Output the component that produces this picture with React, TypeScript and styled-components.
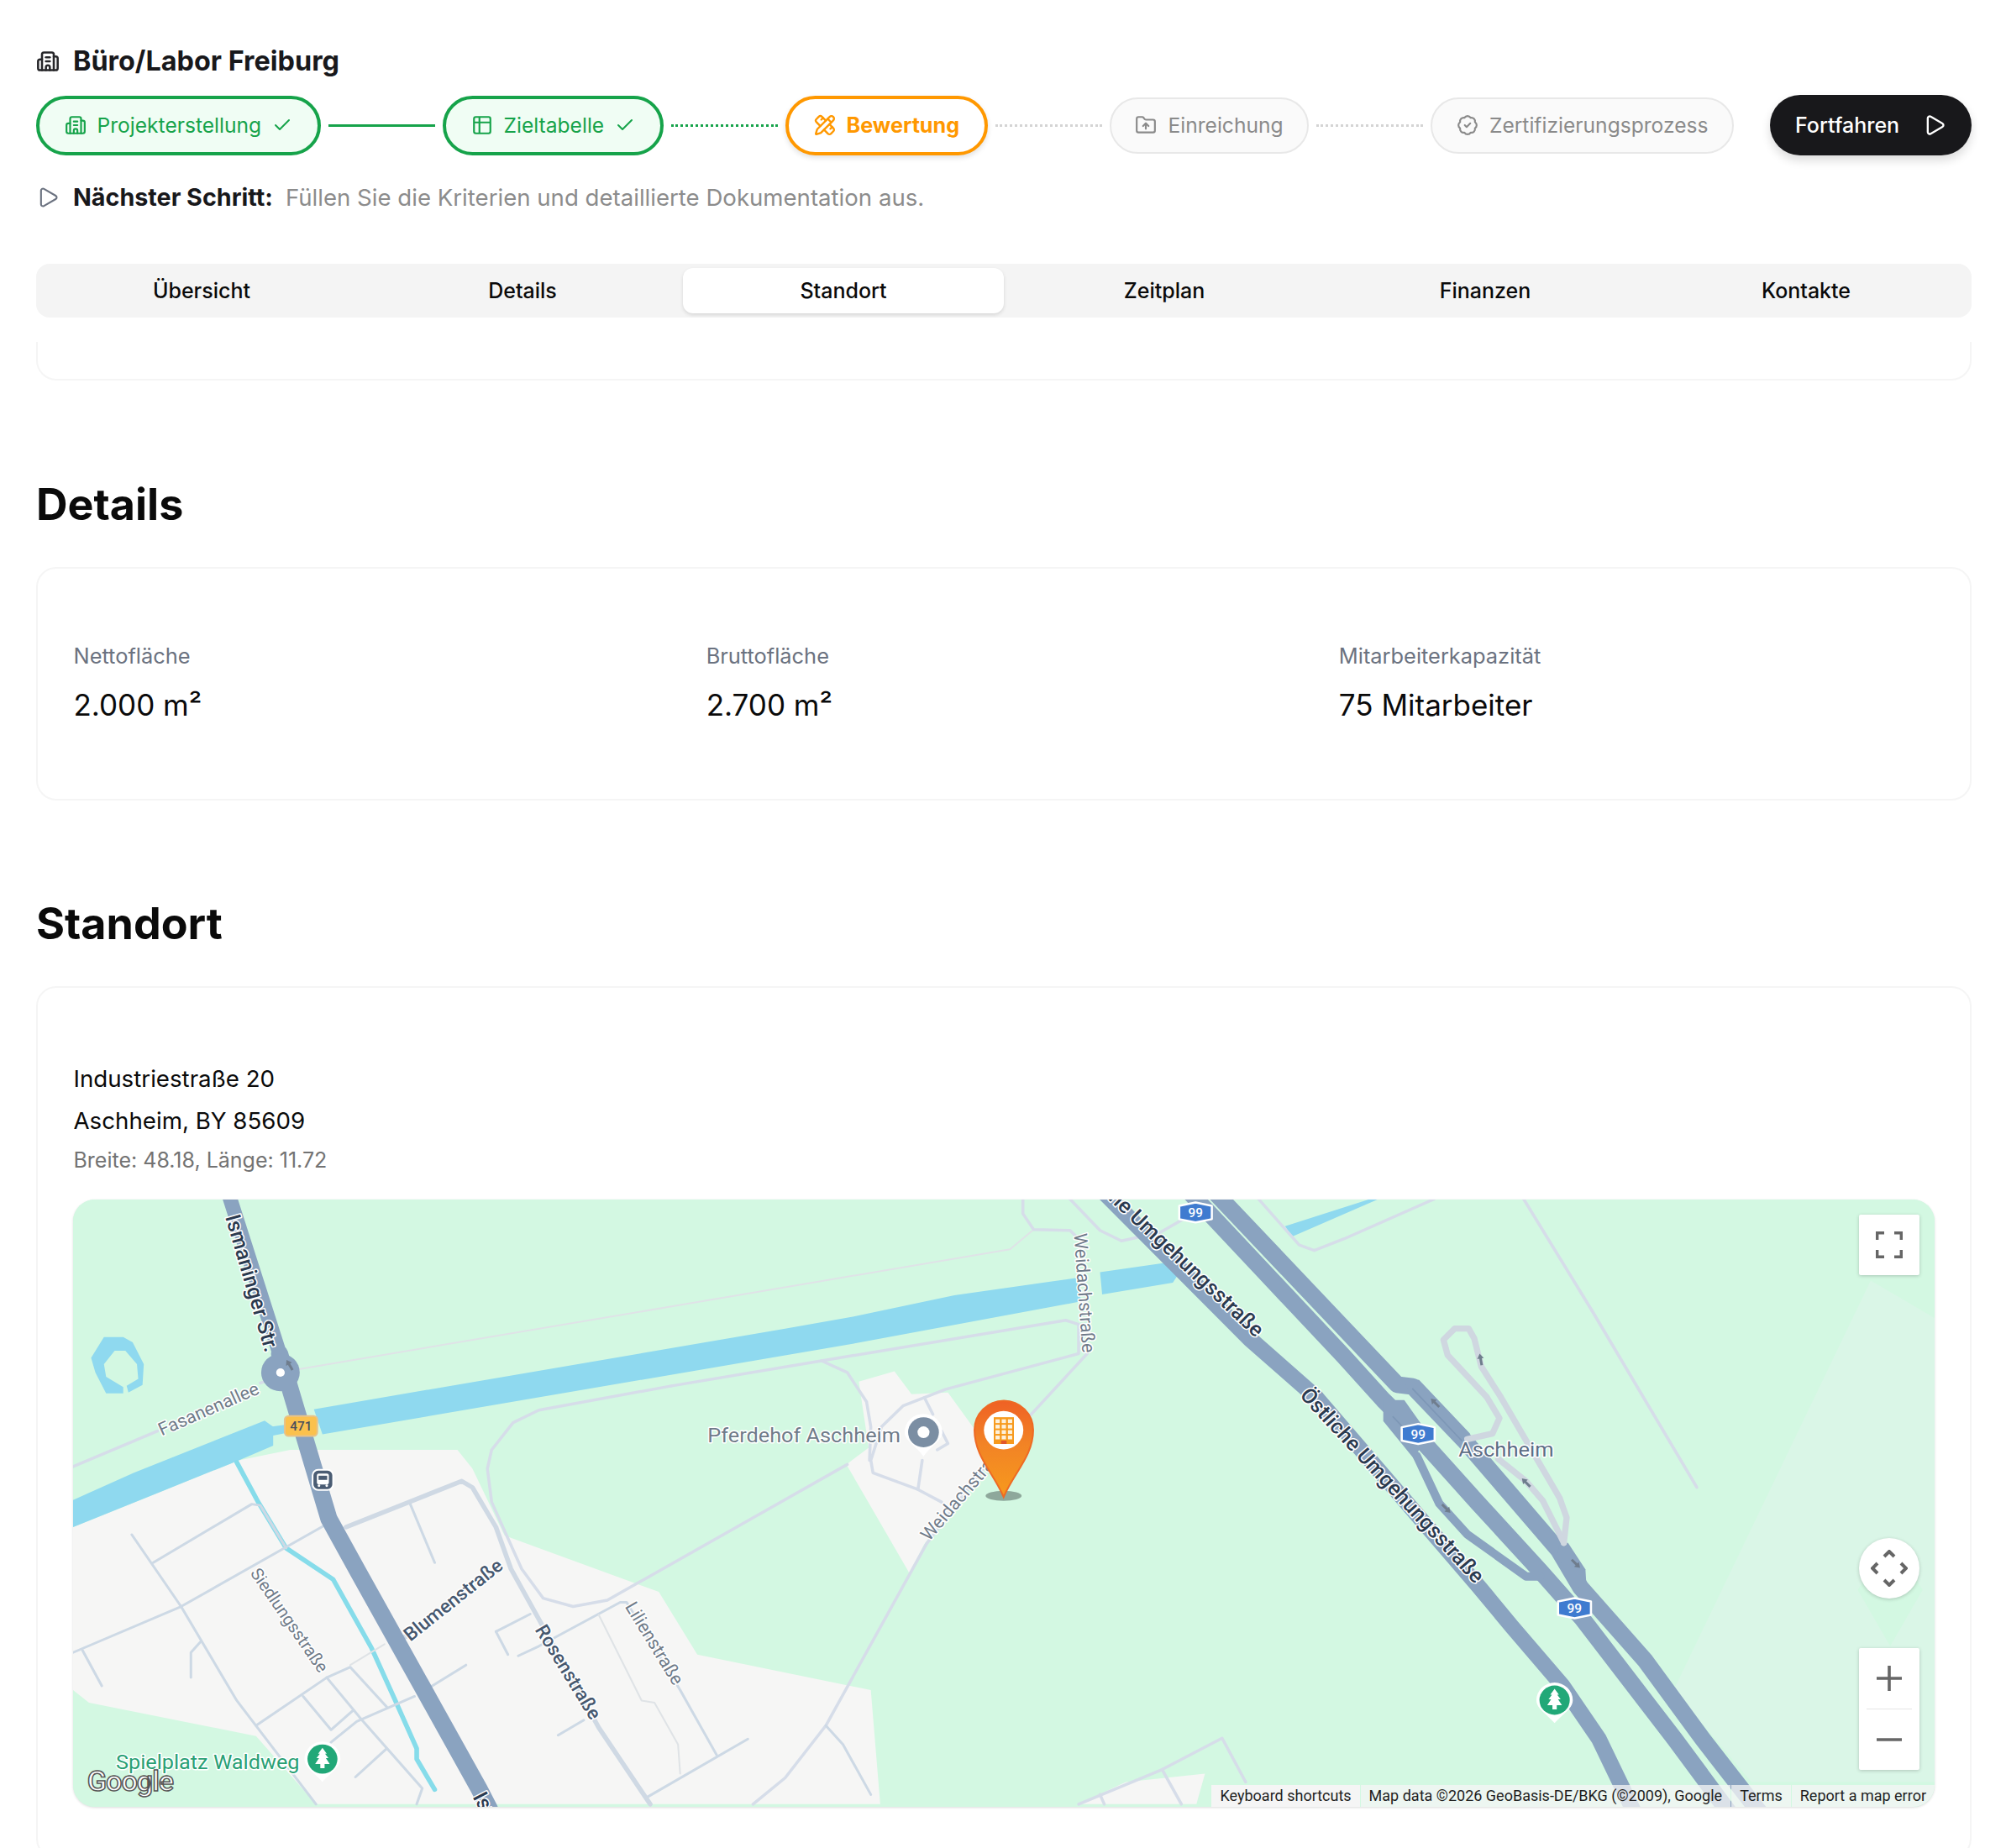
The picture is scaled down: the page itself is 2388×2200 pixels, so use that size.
import React from 'react';
import styled, { createGlobalStyle } from 'styled-components';
import { Building2, Table2, PencilRuler, FolderUp, BadgeCheck, Check, Play } from 'lucide-react';

const GlobalStyle = createGlobalStyle`
  html, body {
    margin: 0;
    padding: 0;
    background: #fff;
    font-family: Inter, "Liberation Sans", sans-serif;
    color: #0a0a0a;
  }
`;

const Page = styled.div`
  box-sizing: border-box;
  width: 2388px;
  height: 2200px;
  overflow: hidden;
  padding: 53px 41px 0 43px;
`;

const TitleRow = styled.div`
  display: flex;
  align-items: center;
  gap: 16px;
  height: 40px;
`;

const Title = styled.h1`
  margin: 0;
  font-size: 32.4px;
  line-height: 40px;
  font-weight: 700;
  color: #18181b;
`;

const StepRow = styled.div`
  display: flex;
  align-items: center;
  height: 72px;
  margin-top: 20px;
`;

type StepState = 'done' | 'active' | 'todo';

const stepColor = { done: '#16a34a', active: '#ff9800', todo: '#8a8a8a' };

const Step = styled.div<{ $state: StepState }>`
  box-sizing: border-box;
  display: flex;
  align-items: center;
  gap: 13px;
  border-radius: 999px;
  white-space: nowrap;
  height: ${p => (p.$state === 'todo' ? '67px' : '71px')};
  padding: 0 ${p => (p.$state === 'todo' ? '28.5px' : '29.5px')};
  font-size: ${p => (p.$state === 'active' ? '25.2px' : '24.6px')};
  font-weight: ${p => (p.$state === 'active' ? 700 : 400)};
  color: ${p => stepColor[p.$state]};
  border: ${p => (p.$state === 'todo' ? '2px solid #e8e8e8' : `4px solid ${stepColor[p.$state]}`)};
  background: ${p => (p.$state === 'done' ? '#f0fdf4' : p.$state === 'active' ? '#fff' : '#fafafa')};
  box-shadow: ${p => (p.$state === 'active' ? '0 3px 6px rgba(0,0,0,.12)' : 'none')};
`;

const Connector = styled.div<{ $kind: 'solid' | 'dotted' | 'muted' }>`
  flex: 1;
  margin: 0 9px;
  height: 0;
  border-top: ${p =>
    p.$kind === 'solid'
      ? '3px solid #16a34a'
      : p.$kind === 'dotted'
        ? '3px dotted #16a34a'
        : '3px dotted #d4d4d4'};
`;

const ContinueButton = styled.button`
  display: flex;
  align-items: center;
  justify-content: space-between;
  box-sizing: border-box;
  flex: none;
  width: 240px;
  height: 72px;
  margin-left: 43px;
  padding: 0 30px;
  border: none;
  border-radius: 999px;
  background: #18181b;
  color: #fff;
  font-family: inherit;
  font-size: 25px;
  font-weight: 500;
  box-shadow: 0 6px 12px rgba(0, 0, 0, 0.14);
`;

const NextRow = styled.div`
  display: flex;
  align-items: center;
  height: 40px;
  margin-top: 30px;
  line-height: 40px;
`;

const NextIcon = styled.span`
  display: flex;
  width: 44px;
  color: #6b7280;
`;

const NextLabel = styled.span`
  font-size: 28.7px;
  font-weight: 700;
  color: #18181b;
  margin-right: 15px;
`;

const NextText = styled.span`
  font-size: 27.6px;
  color: #8c8c8c;
`;

const Tabs = styled.div`
  box-sizing: border-box;
  display: grid;
  grid-template-columns: repeat(6, 1fr);
  height: 64px;
  margin-top: 59px;
  padding: 5px 6px;
  border-radius: 16px;
  background: #f4f4f4;
`;

const Tab = styled.div<{ $active?: boolean }>`
  display: flex;
  align-items: center;
  justify-content: center;
  border-radius: 12px;
  font-size: 25px;
  font-weight: 500;
  color: #0a0a0a;
  background: ${p => (p.$active ? '#fff' : 'transparent')};
  box-shadow: ${p => (p.$active ? '0 2px 4px rgba(0,0,0,.12)' : 'none')};
`;

const ClippedCard = styled.div`
  box-sizing: border-box;
  height: 46px;
  margin-top: 29px;
  border: 2px solid #f5f5f5;
  border-top: none;
  border-radius: 0 0 24px 24px;
`;

const SectionTitle = styled.h2<{ $top: number }>`
  margin: ${p => p.$top}px 0 0;
  font-size: 52px;
  line-height: 60px;
  font-weight: 700;
  color: #0a0a0a;
`;

const Card = styled.div`
  box-sizing: border-box;
  margin-top: 44px;
  border: 2px solid #f5f5f5;
  border-radius: 24px;
`;

const DetailGrid = styled.div`
  display: grid;
  grid-template-columns: repeat(3, 1fr);
  gap: 45px;
  padding: 86px 43px 88px 42.5px;
`;

const Label = styled.div`
  font-size: 25.4px;
  line-height: 36px;
  color: #6b7280;
`;

const Value = styled.div`
  margin-top: 16px;
  font-size: 35px;
  line-height: 48px;
  font-weight: 400;
  color: #0a0a0a;
`;

const LocationBody = styled.div`
  padding: 83px 43px 60px 42.5px;
`;

const AddressLine = styled.div`
  font-size: 27.7px;
  line-height: 50px;
  color: #0a0a0a;
`;

const Coords = styled.div`
  margin-top: 4px;
  font-size: 25px;
  line-height: 36px;
  color: #737373;
`;

const MapFrame = styled.div`
  position: relative;
  height: 723px;
  margin: 29px -1px 0 -0.5px;
  overflow: hidden;
  border-radius: 26px;
  background: #d3f8e2;
  box-shadow: 0 1px 3px rgba(0, 0, 0, 0.14);
`;

const MapCanvas = styled.svg`
  display: block;
  width: 100%;
  height: 100%;
  font-family: Roboto, "Liberation Sans", sans-serif;
`;

const labelColor = { dark: '#2b3a4f', mid: '#46586f', soft: '#6f7b89', green: '#28a074', city: '#5b6d84' };

const MapLabel = styled.text<{ $tone: keyof typeof labelColor; $size: number; $bold?: boolean }>`
  fill: ${p => labelColor[p.$tone]};
  font-size: ${p => p.$size}px;
  font-weight: ${p => (p.$bold ? 500 : 400)};
  paint-order: stroke;
  stroke: #fff;
  stroke-width: 6px;
  stroke-linejoin: round;
`;

const GoogleMark = styled.text`
  fill: #fff;
  stroke: #555;
  stroke-width: 3px;
  font-size: 67px;
  font-weight: 500;
  letter-spacing: -2px;
`;

const ShieldText = styled.text<{ $fill: string }>`
  fill: ${p => p.$fill};
  font-size: 30px;
  font-weight: 500;
  text-anchor: middle;
`;

const ControlBox = styled.div<{ $round?: boolean; $top?: number; $bottom?: number }>`
  position: absolute;
  right: 18px;
  top: ${p => (p.$top !== undefined ? `${p.$top}px` : 'auto')};
  bottom: ${p => (p.$bottom !== undefined ? `${p.$bottom}px` : 'auto')};
  width: 72px;
  background: #fff;
  border-radius: ${p => (p.$round ? '50%' : '2px')};
  box-shadow: 0 1px 4px rgba(0, 0, 0, 0.2);
`;

const ControlCell = styled.div`
  display: flex;
  align-items: center;
  justify-content: center;
  height: 72px;
`;

const ControlDivider = styled.div`
  height: 1px;
  margin: 0 9px;
  background: #e6e6e6;
`;

const Attribution = styled.div`
  position: absolute;
  right: 0;
  bottom: 0;
  display: flex;
  height: 26px;
  font-family: Roboto, "Liberation Sans", sans-serif;
  font-size: 18px;
  line-height: 26px;
  color: #1f1f1f;
`;

const AttributionItem = styled.span<{ $solid?: boolean }>`
  padding: 0 10px;
  margin-left: 1px;
  white-space: nowrap;
  background: ${p => (p.$solid ? '#f5f5f5' : 'rgba(245,245,245,.75)')};
`;

const GREEN_ROAD = '#d6dde9';
const CITY_ROAD = '#cdd9e5';
const HIGHWAY = '#8aa3c0';

// all map geometry below is traced in crop coordinates, the groups scale it back to page px
const cityRoads = [
  '53,1100 305,990 650,790',
  '190,818 305,990 435,1215 620,1463',
  '240,885 470,745 490,748 550,850',
  '840,745 897,885',
  '75,1095 120,1180',
  '350,1075 328,1100 328,1160',
  '480,1275 645,1160 700,1135 785,1230',
  '590,1205 655,1285 705,1240',
  '645,1160 730,1265 868,1425 855,1463',
  '655,1315 715,1265 850,1205',
  '875,1190 970,1130',
  '785,1330 712,1398',
  '1040,1050 1120,1008',
  '1040,1050 1068,1105',
  '1092,1108 1140,1085 1330,980 1345,980 1470,1190 1555,1345',
  '1185,1298 1245,1262',
  '1395,1445 1628,1307',
  '1810,1275 1850,1320 1915,1440',
];

const thickCityRoads = [
  '690,800 960,690 985,705 1040,800 1075,900 1140,1020 1280,1280 1400,1463',
];

const parkRoads = [
  '1450,462 1140,520 1080,550 1030,615 1020,660 1030,740 1100,900 1150,970 1220,990 1300,975 1860,650',
  '53,655 250,570',
  '490,455 505,450',
  '1450,462 1800,402 2370,305 2400,315 2400,385 2090,470 1990,510 1940,560 1915,640 1920,670 2025,710 2080,740',
  '1800,402 1860,430 1905,500 1915,560 1912,640',
  '2040,490 2060,530',
  '2035,640 2025,710',
  '2080,570 2095,600 2070,615',
  '2420,385 2285,535',
  '2185,650 2045,840 1810,1275 1715,1400 1640,1463',
  '2270,15 2270,50 2295,88 2380,90 2400,110',
  '2380,15 2450,90 2500,115 2590,95 2650,60',
  '2400,1463 2595,1380 2735,1305 2790,1410',
  '2595,1380 2640,1463',
  '2450,1440 2460,1463',
  '2820,15 2915,125 2950,138 3020,110 3230,15',
];

const faintRoads = [
  '580,422 1450,272 2240,135 2295,88',
];

const lightAlleys = [
  '700,1130 780,1080',
  '1280,1010 1380,1215 1410,1220 1465,1320 1470,1390',
];

const water = [
  '53,735 195,670 500,545 520,560 520,605 440,640 53,800',
  '500,562 550,555 550,575 500,585',
  '615,518 1715,325 1880,295 2110,245 2400,203 2405,260 1880,360 635,578',
  '2450,190 2655,160 2620,215 2455,243',
  '2882,80 3080,15 3100,15 2898,105',
  '95,395 125,345 170,345 192,358 218,410 215,460 182,478 178,462 205,445 202,410 175,378 150,378 125,410 130,440 170,465 170,480 130,480 105,430',
];

const greyLand = [
  '53,800 440,640 560,615 950,615 985,660 1060,820 1420,955 1510,1105 1915,1190 1937,1463 620,1463 480,1300 90,1220 53,1190',
  '1887,452 1970,427 2010,482 2095,478 2160,570 2185,650 2040,840 2005,910 1858,650 1910,610',
  '2400,1463 2510,1410 2695,1390 2675,1463',
];

const Road: React.FC<{ points: string; color: string; width: number }> = ({ points, color, width }) => (
  <polyline
    points={points}
    fill="none"
    stroke={color}
    strokeWidth={width}
    strokeLinecap="round"
    strokeLinejoin="round"
  />
);

const TreePin: React.FC<{ x: number; y: number }> = ({ x, y }) => (
  <g transform={`translate(${x},${y})`}>
    <path d="M-42 0a42 42 0 0 1 84 0c0 20-22 32-42 55c-20-23-42-35-42-55z" fill="#fff" />
    <circle r="35" fill="#22a878" />
    <path d="M0-27 10-13H6L14-2H8L17 12H5V22H-5V12H-17L-8-2H-14L-6-13H-10z" fill="#fff" />
  </g>
);

const Shield: React.FC<{ x: number; y: number }> = ({ x, y }) => (
  <g transform={`translate(${x},${y})`}>
    <path d="M-38-16 0-24 38-16V16L0 24-38 16z" fill="#3f7bd0" stroke="#fff" strokeWidth="5" strokeLinejoin="round" />
    <ShieldText y="11" $fill="#fff">99</ShieldText>
  </g>
);

const Arrow: React.FC<{ x: number; y: number; r: number }> = ({ x, y, r }) => (
  <path transform={`translate(${x},${y}) rotate(${r}) scale(1.5)`} d="M0-14 8-2H3V14H-3V-2H-8z" fill="#6f7d8d" />
);

const MapDrawing: React.FC = () => (
  <MapCanvas viewBox="0 0 2216 723">
    <defs>
      <linearGradient id="markerFill" x1="0" y1="0" x2="0" y2="1">
        <stop offset="0" stopColor="#ef6125" />
        <stop offset="0.45" stopColor="#f28325" />
        <stop offset="1" stopColor="#f79a1d" />
      </linearGradient>
    </defs>
    <rect width="2216" height="723" fill="#d3f8e2" />

    <g transform="translate(-27,-8) scale(0.51,0.4975)">
      {greyLand.map(p => <polygon key={p} points={p} fill="#f6f6f5" />)}
      {water.map(p => <polygon key={p} points={p} fill="#8fd9ef" />)}
      <Road points="435,645 485,740 550,850 660,925 750,1090 805,1215 855,1330 855,1355 897,1428" color="#86dcea" width={11} />
      {faintRoads.map(p => <Road key={p} points={p} color="#dfe3e7" width={4} />)}
      {parkRoads.map(p => <Road key={p} points={p} color={GREEN_ROAD} width={7} />)}
      {cityRoads.map(p => <Road key={p} points={p} color={CITY_ROAD} width={6} />)}
      {lightAlleys.map(p => <Road key={p} points={p} color="#dfe3e6" width={4} />)}
      {thickCityRoads.map(p => <Road key={p} points={p} color="#cfd9e4" width={11} />)}
      <Road points="810,1072 832,1060" color="#cfd9e4" width={12} />

      <Road points="415,0 535,385" color={HIGHWAY} width={34} />
      <Road points="535,385 650,780 720,910 1000,1425 1025,1475" color={HIGHWAY} width={40} />
      <circle cx="537" cy="430" r="45" fill={HIGHWAY} />
      <circle cx="537" cy="430" r="10" fill="#fff" />
      <path transform="translate(558,412) rotate(-30)" d="M0-14 8-2H3V14H-3V-2H-8z" fill="#6f7d8d" />

      <Road points="2460,0 2800,350 2953,488" color={HIGHWAY} width={38} />

      <g transform="translate(585,558)">
        <rect x="-38" y="-24" width="76" height="48" rx="9" fill="#fbc14d" stroke="#e7c38a" strokeWidth="4" />
        <ShieldText y="11" $fill="#4a4f5c">471</ShieldText>
      </g>
      <g transform="translate(636,687)">
        <rect x="-24" y="-24" width="48" height="48" rx="13" fill="#4a5c73" stroke="#fff" strokeWidth="4" />
        <rect x="-14" y="-15" width="28" height="26" rx="5" fill="#fff" />
        <rect x="-10" y="-10" width="20" height="10" fill="#4a5c73" />
        <circle cx="-9" cy="14" r="3" fill="#fff" />
        <circle cx="9" cy="14" r="3" fill="#fff" />
      </g>

      <MapLabel transform="translate(408,58) rotate(74)" $tone="dark" $size={50} $bold>Ismaninger Str.</MapLabel>
      <MapLabel transform="translate(260,582) rotate(-24)" $tone="soft" $size={43}>Fasanenallee</MapLabel>
      <MapLabel transform="translate(465,910) rotate(56)" $tone="soft" $size={40.5}>Siedlungsstraße</MapLabel>
      <MapLabel transform="translate(840,1075) rotate(-39)" $tone="mid" $size={45} $bold>Blumenstraße</MapLabel>
      <MapLabel transform="translate(1130,1045) rotate(59)" $tone="mid" $size={45} $bold>Rosenstraße</MapLabel>
      <MapLabel transform="translate(1340,990) rotate(59)" $tone="soft" $size={43}>Lilienstraße</MapLabel>
      <MapLabel transform="translate(985,1445) rotate(62)" $tone="dark" $size={50} $bold>Ismaninger Str.</MapLabel>
      <MapLabel x="153" y="1378" $tone="green" $size={49.5}>Spielplatz Waldweg</MapLabel>
      <TreePin x={635} y={1355} />
      <GoogleMark x="86" y="1432">Google</GoogleMark>
    </g>

    <g transform="translate(1493,-8) scale(0.5155,0.4975)">
      <polygon points="800,1190 1255,210 1403,300 1403,1410 980,1410" fill="#daf6e7" />
      <polygon points="1225,950 1300,1085 1375,950 1300,830" fill="#d3f8e2" />
    </g>

    <g transform="translate(1513,132) scale(0.3333)">
      <Road points="885,0 1260,632" color={GREEN_ROAD} width={11} />
      <Road points="640,-400 885,0" color={GREEN_ROAD} width={11} />

      <Road points="-460,-420 0,65 190,265 245,272 430,465 765,855 845,990 1075,1250 1280,1530 1490,1800" color={HIGHWAY} width={60} />
      <Road points="-550,-420 0,165 140,320 170,350 300,490 480,690 700,930 850,1100 1180,1530 1380,1800" color={HIGHWAY} width={60} />
      <Road points="-100,310 480,985 600,1130 780,1340 910,1530 1040,1800" color={HIGHWAY} width={56} />
      <Road points="260,520 340,690 440,800 650,950 700,950" color={HIGHWAY} width={30} />
      <polygon points="205,240 268,248 450,440 400,470 240,300" fill={HIGHWAY} />
      <polygon points="140,320 215,320 300,440 250,530 140,395" fill={HIGHWAY} />
      <polygon points="770,830 800,830 862,925 865,970 840,990 760,880" fill={HIGHWAY} />
      <Road points="245,280 420,465" color="#7d97b6" width={5} />
      <Road points="175,380 260,470" color="#7d97b6" width={5} />

      <Road points="785,830 795,740 770,670 560,310 490,200 465,100 445,65 395,65 355,105 370,160 510,310 555,385 530,440 440,460" color="#cfd7e0" width={22} />
      <Road points="550,530 650,610 710,680 785,830" color="#cfd7e0" width={22} />
      <Arrow x={488} y={175} r={-10} />
      <Arrow x={325} y={330} r={-45} />
      <Arrow x={650} y={615} r={-45} />
      <Arrow x={365} y={708} r={135} />
      <Arrow x={828} y={905} r={135} />
    </g>

    <g transform="translate(713,-8) scale(0.51,0.4975)">
      <MapLabel x="83" y="597" $tone="soft" $size={49.6}>Pferdehof Aschheim</MapLabel>
      <g transform="translate(587,573)">
        <path d="M-44 0a44 44 0 0 1 88 0c0 20-24 30-44 58c-20-28-44-38-44-58z" fill="#fff" />
        <circle r="36" fill="#7b8ea3" />
        <circle r="14" fill="#fff" />
      </g>
      <MapLabel transform="translate(938,98) rotate(86)" $tone="soft" $size={43}>Weidachstraße</MapLabel>
      <MapLabel transform="translate(600,835) rotate(-50)" $tone="soft" $size={43}>Weidachstraße</MapLabel>
      <MapLabel transform="translate(1362,348) rotate(44)" textAnchor="end" $tone="dark" $size={50} $bold>Östliche Umgehungsstraße</MapLabel>
      <Shield x={1222} y={47} />

      <ellipse cx="774" cy="725" rx="42" ry="12" fill="#8ea89b" />
      <path
        d="M774 728C750 670 706 630 706 568a68 70 0 0 1 137 0C843 630 798 670 774 728z"
        fill="url(#markerFill)"
        stroke="#ee6a24"
        strokeWidth="4"
      />
      <circle cx="774" cy="568" r="46" fill="#fff" />
      <rect x="751" y="537" width="47" height="64" fill="#f79a1d" />
      {[0, 1, 2, 3].map(r =>
        [0, 1, 2].map(c => (
          <rect key={`${r}-${c}`} x={755 + c * 14.5} y={542 + r * 13} width="10" height="9" fill="#fdf1dc" />
        ))
      )}
      <rect x="768" y="593" width="13" height="8" fill="#e2572b" />
    </g>

    <g transform="translate(1493,-8) scale(0.5155,0.4975)">
      <MapLabel transform="translate(341,937) rotate(48)" textAnchor="end" $tone="dark" $size={50} $bold>Östliche Umgehungsstraße</MapLabel>
      <Shield x={210} y={577} />
      <Shield x={571} y={994} />
      <MapLabel x="303" y="632" $tone="city" $size={49.5}>Aschheim</MapLabel>
      <TreePin x={525} y={1214} />
    </g>
  </MapCanvas>
);

const tabs = ['Übersicht', 'Details', 'Standort', 'Zeitplan', 'Finanzen', 'Kontakte'];

const details = [
  { label: 'Nettofläche', value: '2.000 m²' },
  { label: 'Bruttofläche', value: '2.700 m²' },
  { label: 'Mitarbeiterkapazität', value: '75 Mitarbeiter' },
];

const App: React.FC = () => {
  return (
    <Page>
      <GlobalStyle />
      <TitleRow>
        <Building2 size={28} strokeWidth={2.2} color="#27272a" />
        <Title>Büro/Labor Freiburg</Title>
      </TitleRow>

      <StepRow>
        <Step $state="done">
          <Building2 size={26} strokeWidth={2} />
          Projekterstellung
          <Check size={24} strokeWidth={2} />
        </Step>
        <Connector $kind="solid" />
        <Step $state="done">
          <Table2 size={26} strokeWidth={2} />
          Zieltabelle
          <Check size={24} strokeWidth={2} />
        </Step>
        <Connector $kind="dotted" />
        <Step $state="active">
          <PencilRuler size={26} strokeWidth={2.2} />
          Bewertung
        </Step>
        <Connector $kind="muted" />
        <Step $state="todo">
          <FolderUp size={26} strokeWidth={2} />
          Einreichung
        </Step>
        <Connector $kind="muted" />
        <Step $state="todo">
          <BadgeCheck size={26} strokeWidth={2} />
          Zertifizierungsprozess
        </Step>
        <ContinueButton>
          Fortfahren
          <Play size={28} strokeWidth={2} />
        </ContinueButton>
      </StepRow>

      <NextRow>
        <NextIcon><Play size={28} strokeWidth={1.8} /></NextIcon>
        <NextLabel>Nächster Schritt:</NextLabel>
        <NextText>Füllen Sie die Kriterien und detaillierte Dokumentation aus.</NextText>
      </NextRow>

      <Tabs>
        {tabs.map(t => (
          <Tab key={t} $active={t === 'Standort'}>{t}</Tab>
        ))}
      </Tabs>
      <ClippedCard />

      <SectionTitle $top={118}>Details</SectionTitle>
      <Card>
        <DetailGrid>
          {details.map(d => (
            <div key={d.label}>
              <Label>{d.label}</Label>
              <Value>{d.value}</Value>
            </div>
          ))}
        </DetailGrid>
      </Card>

      <SectionTitle $top={117}>Standort</SectionTitle>
      <Card>
        <LocationBody>
          <AddressLine>Industriestraße 20</AddressLine>
          <AddressLine>Aschheim, BY 85609</AddressLine>
          <Coords>Breite: 48.18, Länge: 11.72</Coords>
          <MapFrame>
            <MapDrawing />
            <ControlBox $top={18}>
              <ControlCell>
                <svg width="32" height="32" viewBox="0 0 32 32" fill="none" stroke="#666" strokeWidth="3.4">
                  <path d="M1.7 10V1.7H10M22 1.7h8.3V10M30.3 22v8.3H22M10 30.3H1.7V22" />
                </svg>
              </ControlCell>
            </ControlBox>
            <ControlBox $round $bottom={248}>
              <ControlCell>
                <svg width="44" height="44" viewBox="0 0 44 44" fill="none" stroke="#666" strokeWidth="4">
                  <path d="M16 8l6-6 6 6M16 36l6 6 6-6M8 16l-6 6 6 6M36 16l6 6-6 6" />
                </svg>
              </ControlCell>
            </ControlBox>
            <ControlBox $bottom={44}>
              <ControlCell>
                <svg width="30" height="30" viewBox="0 0 30 30" stroke="#666" strokeWidth="3.6">
                  <path d="M0 15h30M15 0v30" />
                </svg>
              </ControlCell>
              <ControlDivider />
              <ControlCell>
                <svg width="30" height="30" viewBox="0 0 30 30" stroke="#666" strokeWidth="3.6">
                  <path d="M0 15h30" />
                </svg>
              </ControlCell>
            </ControlBox>
            <Attribution>
              <AttributionItem $solid>Keyboard shortcuts</AttributionItem>
              <AttributionItem>Map data ©2026 GeoBasis-DE/BKG (©2009), Google</AttributionItem>
              <AttributionItem>Terms</AttributionItem>
              <AttributionItem>Report a map error</AttributionItem>
            </Attribution>
          </MapFrame>
        </LocationBody>
      </Card>
    </Page>
  );
};

export default App;
